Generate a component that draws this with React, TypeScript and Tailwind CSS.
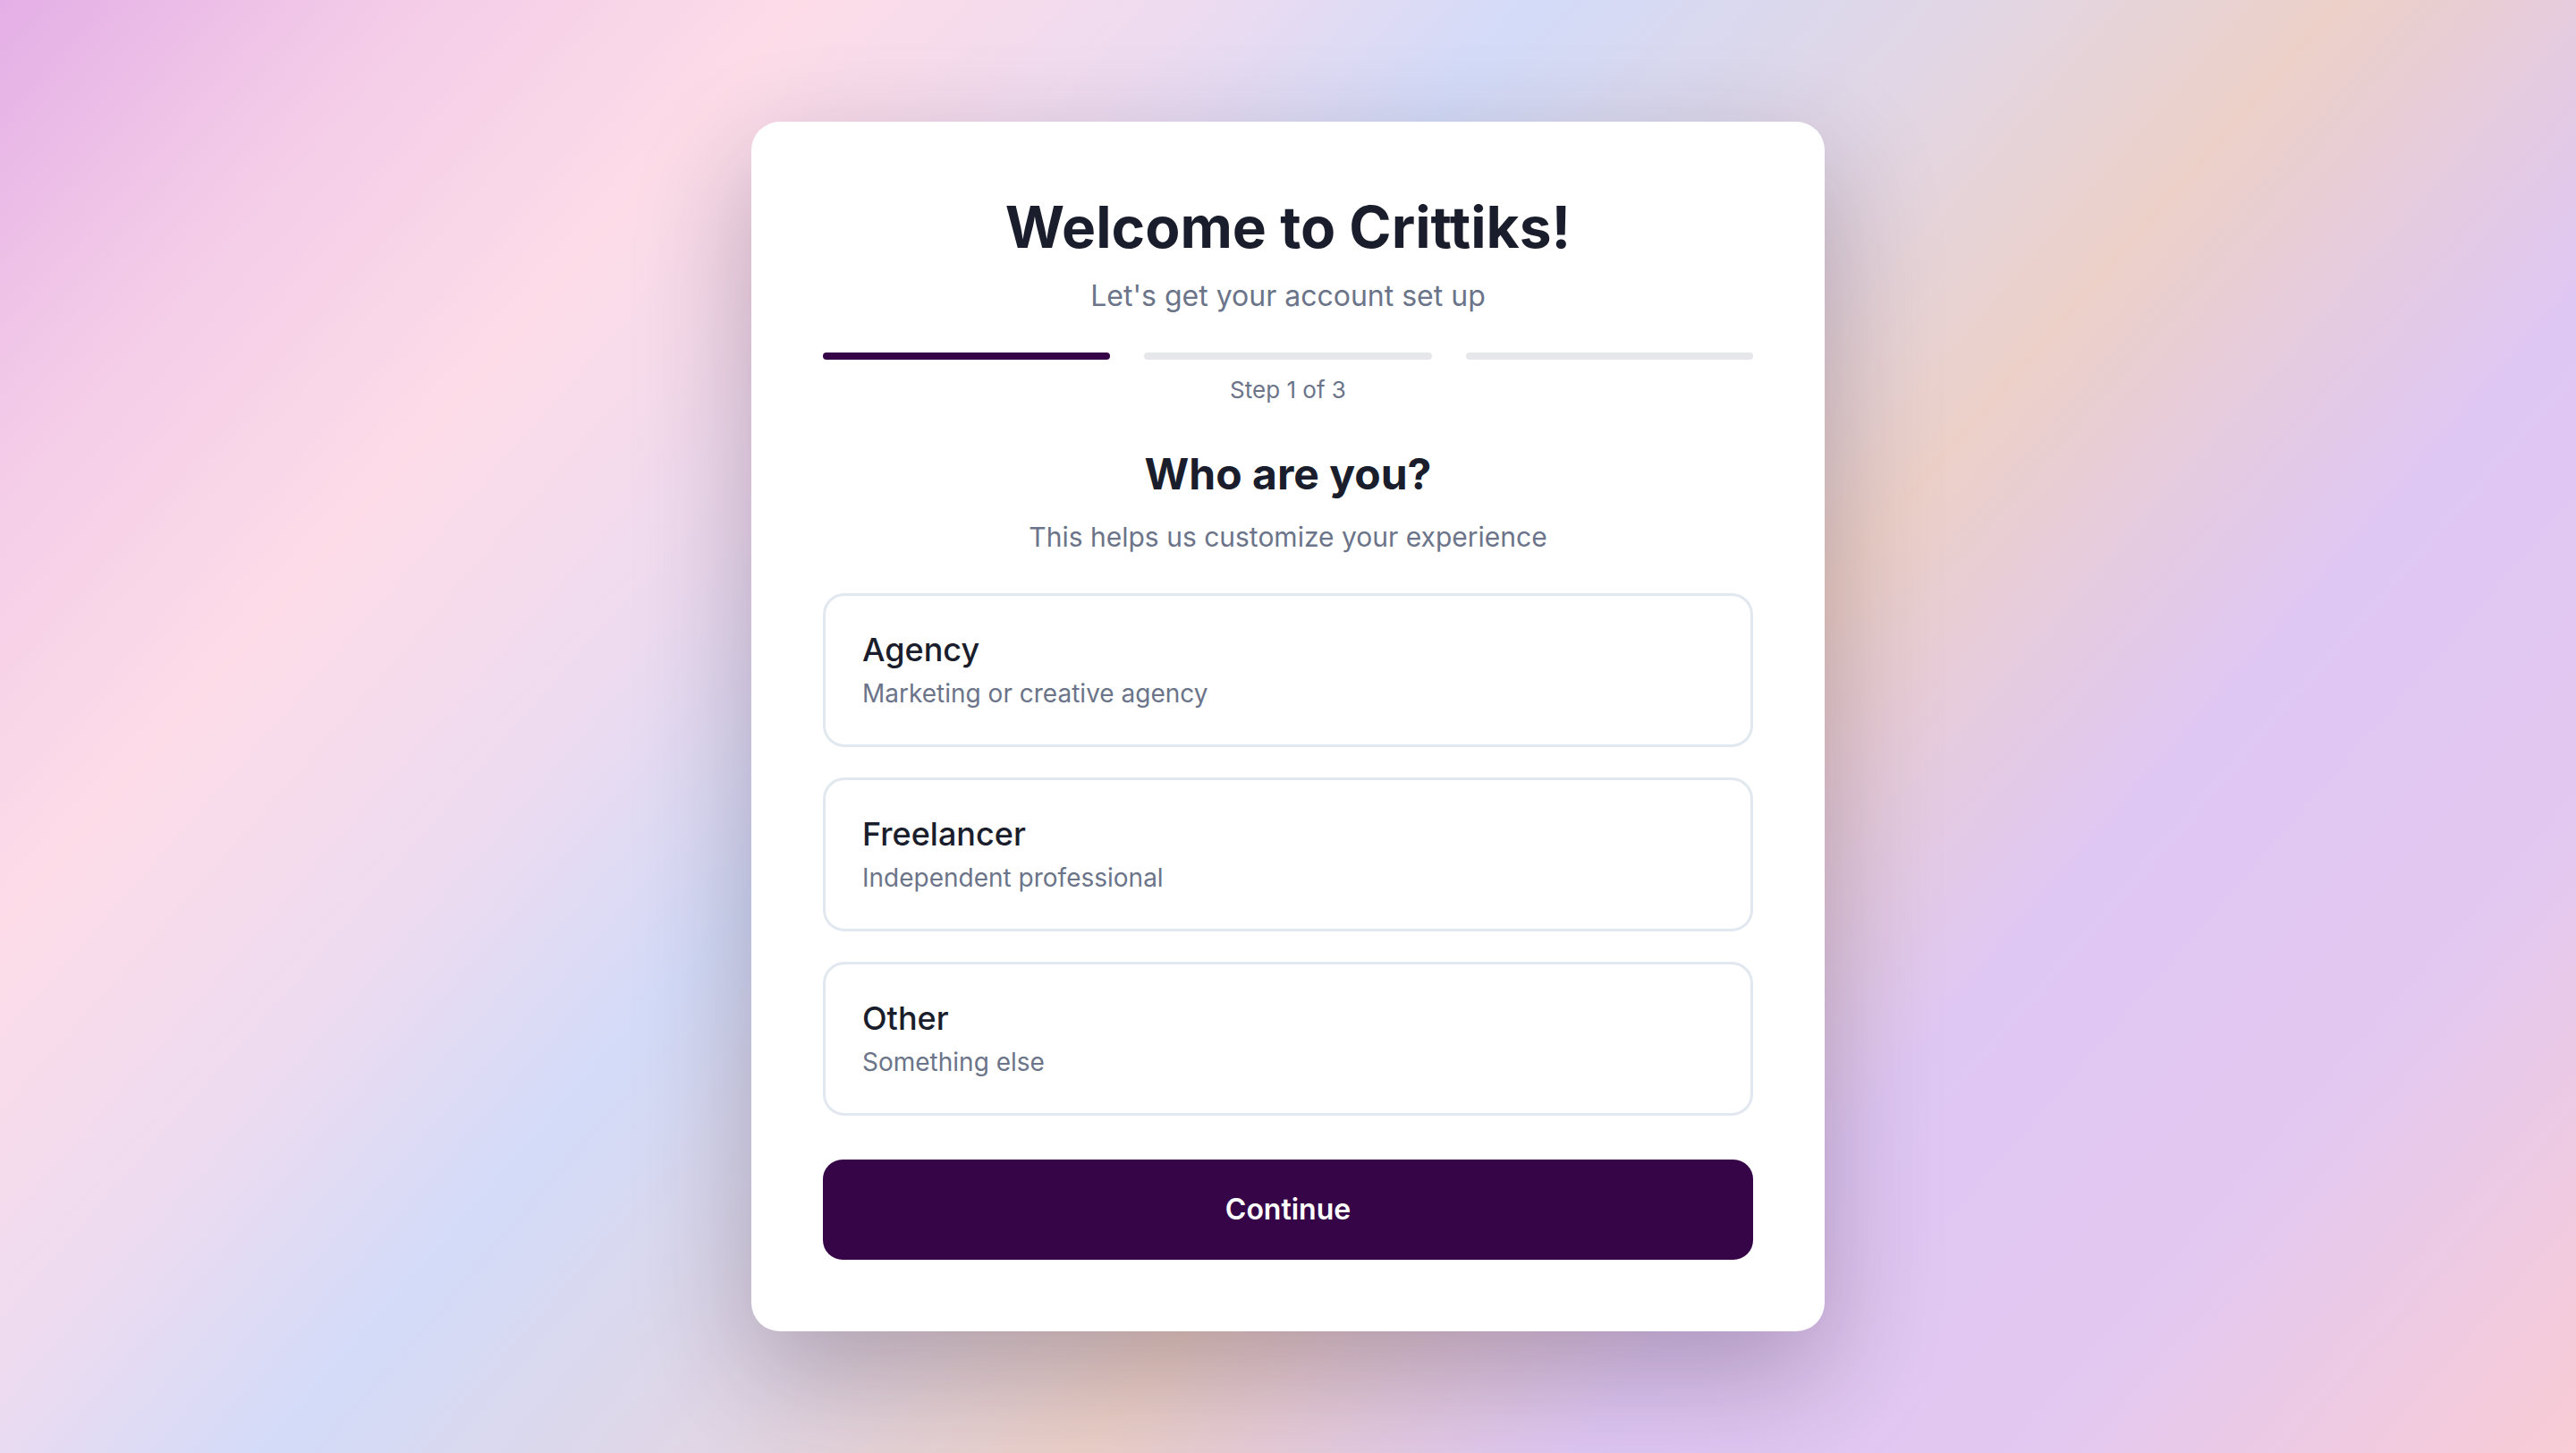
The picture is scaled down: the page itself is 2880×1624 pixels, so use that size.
import { useState } from "react";

const ROLES = [
  { id: "agency", title: "Agency", desc: "Marketing or creative agency" },
  { id: "freelancer", title: "Freelancer", desc: "Independent professional" },
  { id: "other", title: "Other", desc: "Something else" },
];

const STEPS = 3;

export default function App() {
  const [role, setRole] = useState<string | null>(null);
  const step = 1;

  return (
    <div className="flex min-h-screen items-center justify-center bg-[linear-gradient(131deg,#e4afe6_0%,#f3cbe8_10%,#fddce8_21%,#eedbf0_31%,#d3dbf8_40%,#e2d6e4_52%,#ecd0c8_61%,#dfc7f4_74%,#e3c8f0_86%,#f9ccd5_100%)] font-['Inter',sans-serif]">
      <div className="w-[1200px] rounded-[32px] bg-white p-20 shadow-[0_48px_128px_rgba(40,20,40,0.28)]">
        <h1 className="text-center text-[64px] leading-[1.2] font-bold text-[#1a1d2b]">Welcome to Crittiks!</h1>
        <p className="mt-[15px] text-center text-[32px] leading-[48px] text-[#6b7489]">Let's get your account set up</p>

        <div className="mt-[39px] flex gap-[38px]">
          {Array.from({ length: STEPS }, (_, i) => (
            <div key={i} className={`h-2 flex-1 rounded-full ${i < step ? "bg-[#350547]" : "bg-gray-200"}`} />
          ))}
        </div>
        <p className="mt-[14px] text-center text-[26px] leading-[40px] text-[#6b7489]">
          Step {step} of {STEPS}
        </p>

        <h2 className="mt-[42px] text-center text-[48px] leading-[64px] font-bold text-[#1a1d2b]">Who are you?</h2>
        <p className="mt-[15px] text-center text-[30px] leading-[47px] text-[#6b7489]">
          This helps us customize your experience
        </p>

        <div className="mt-[39px] flex flex-col gap-[34px]">
          {ROLES.map((r) => (
            <button
              key={r.id}
              onClick={() => setRole(r.id)}
              className={`rounded-[24px] border-[3px] bg-white px-[41px] pt-8 pb-[37px] text-left ${role === r.id ? "border-[#350547]" : "border-slate-200"}`}
            >
              <div className="text-[36px] leading-[56px] font-medium text-[#1a1d2b]">{r.title}</div>
              <div className="mt-px text-[28px] leading-[40px] text-[#6b7489]">{r.desc}</div>
            </button>
          ))}
        </div>

        <button className="mt-[49px] w-full rounded-[22px] bg-[#350547] py-8 text-[32px] leading-[48px] font-semibold text-white">
          Continue
        </button>
      </div>
    </div>
  );
}
